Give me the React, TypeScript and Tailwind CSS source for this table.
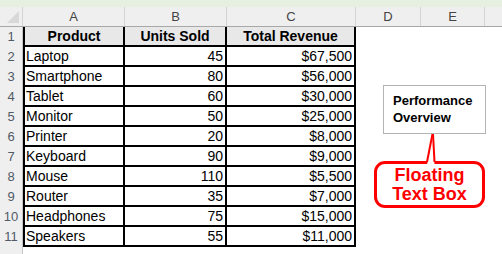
import React from 'react';

const rows = [
  ['Laptop', '45', '$67,500'],
  ['Smartphone', '80', '$56,000'],
  ['Tablet', '60', '$30,000'],
  ['Monitor', '50', '$25,000'],
  ['Printer', '20', '$8,000'],
  ['Keyboard', '90', '$9,000'],
  ['Mouse', '110', '$5,500'],
  ['Router', '35', '$7,000'],
  ['Headphones', '75', '$15,000'],
  ['Speakers', '55', '$11,000'],
];

const cols = [
  { label: 'A', w: 'w-[102px]' },
  { label: 'B', w: 'w-[102px]' },
  { label: 'C', w: 'w-[129px]' },
  { label: 'D', w: 'w-[65px]' },
  { label: 'E', w: 'w-[64px]' },
];

function RowNum({ n }: { n?: number }) {
  return (
    <div className="w-[23px] shrink-0 h-full bg-[#efefef] border-r border-[#c6c6c6] flex items-center justify-center text-[13px] text-[#505a66]">
      {n}
    </div>
  );
}

export default function App() {
  return (
    <div
      className="relative w-[502px] h-[254px] overflow-hidden bg-white text-black"
      style={{ fontFamily: '"Liberation Sans", Arial, sans-serif' }}
    >
      {/* ribbon strip */}
      <div className="h-[7px] bg-[#e6efe0]" />

      {/* column headers */}
      <div className="flex h-[20px] bg-[#efefef] border-b border-[#a8a8a8]">
        <div className="w-[23px] shrink-0 relative border-r border-[#d4d4d4]">
          <svg className="absolute left-0 top-0" width="23" height="19" viewBox="0 0 23 19">
            <polygon points="7,16 19,16 19,4" fill="#d8d8d8" />
          </svg>
        </div>
        {cols.map((c) => (
          <div
            key={c.label}
            className={`${c.w} shrink-0 border-r border-[#d4d4d4] flex items-center justify-center text-[13px] text-[#444]`}
          >
            {c.label}
          </div>
        ))}
        <div className="flex-1" />
      </div>

      {/* header row 1 */}
      <div className="flex h-[20px]">
        <RowNum n={1} />
        <div className="w-[102px] shrink-0 border-l-2 border-r-2 border-b-2 border-black bg-[#e8e8e8] flex items-center justify-center font-bold text-[14px]">
          Product
        </div>
        <div className="w-[102px] shrink-0 border-r-2 border-b-2 border-black bg-[#e8e8e8] flex items-center justify-center font-bold text-[14px]">
          Units Sold
        </div>
        <div className="w-[129px] shrink-0 border-r-2 border-b-2 border-black bg-[#e8e8e8] flex items-center justify-center font-bold text-[14px]">
          Total Revenue
        </div>
        <div className="flex-1" />
      </div>

      {rows.map((r, i) => (
        <div key={r[0]} className="flex h-[20px]">
          <RowNum n={i + 2} />
          <div className="w-[102px] shrink-0 border-l-2 border-r-2 border-b-2 border-black flex items-center pl-[1px] text-[14px]">
            {r[0]}
          </div>
          <div className="w-[102px] shrink-0 border-r-2 border-b-2 border-black flex items-center justify-end pr-[2px] text-[14px]">
            {r[1]}
          </div>
          <div className="w-[129px] shrink-0 border-r-2 border-b-2 border-black flex items-center justify-end pr-[2px] text-[14px]">
            {r[2]}
          </div>
          <div className="flex-1" />
        </div>
      ))}

      <div className="flex h-[20px]">
        <RowNum />
        <div className="flex-1" />
      </div>

      {/* floating text box */}
      <div className="absolute left-[383px] top-[85px] w-[103px] h-[49px] border border-[#b4b4b4] bg-white pl-[9px] pt-[6px] text-[13px] leading-[17px] font-bold">
        Performance
        <br />
        Overview
      </div>

      {/* callout */}
      <div className="absolute left-[374px] top-[161px] w-[111px] h-[47px] border-[3px] border-[#ff0000] rounded-[11px] bg-white flex flex-col items-center justify-center text-[18px] leading-[19px] font-bold text-[#ff0000]">
        <span>Floating</span>
        <span>Text Box</span>
      </div>
      <svg className="absolute left-[420px] top-[130px]" width="24" height="36" viewBox="0 0 24 36">
        <polygon points="7,35 12,4 13,4 14.5,35" fill="#ffffff" />
        <line x1="7" y1="32" x2="12.5" y2="4" stroke="#ff0000" strokeWidth="2" />
        <line x1="14.5" y1="32" x2="13" y2="4" stroke="#ff0000" strokeWidth="2" />
      </svg>
    </div>
  );
}
